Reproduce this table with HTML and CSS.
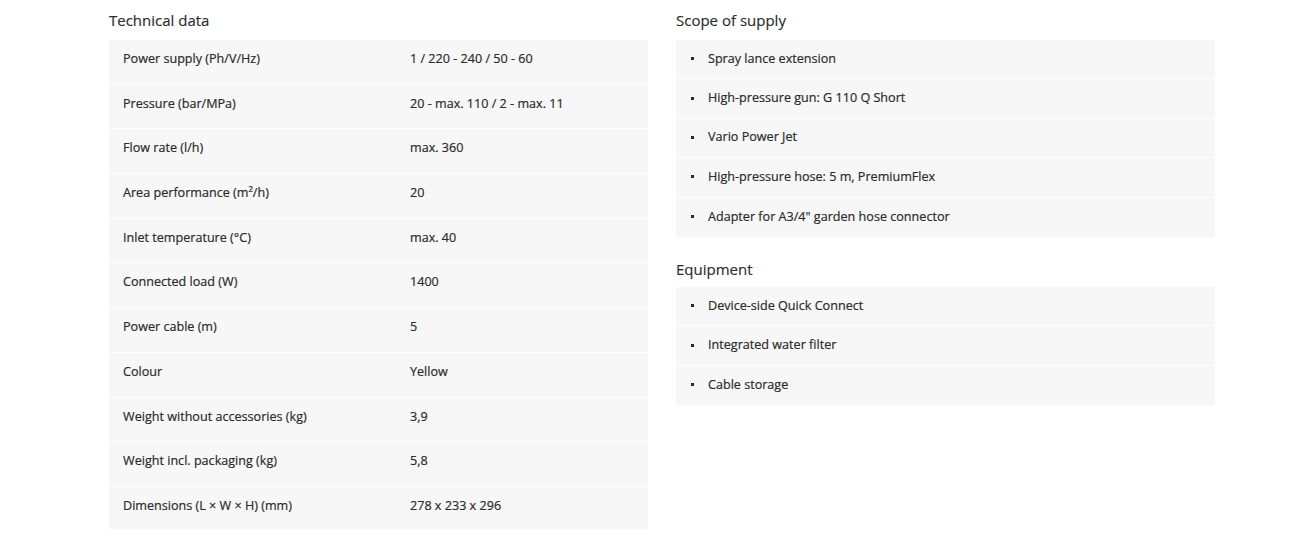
FILE: index.html
```html
<!DOCTYPE html>
<html>
<head>
<meta charset="utf-8">
<link rel="stylesheet" href="styles.css">
</head>
<body>
<div class="page">
  <section class="col">
    <h2 class="title">Technical data</h2>
    <div class="table">
      <div class="row"><span class="label">Power supply (Ph/V/Hz)</span><span class="value">1 / 220 - 240 / 50 - 60</span></div>
      <div class="row"><span class="label">Pressure (bar/MPa)</span><span class="value">20 - max. 110 / 2 - max. 11</span></div>
      <div class="row"><span class="label">Flow rate (l/h)</span><span class="value">max. 360</span></div>
      <div class="row"><span class="label">Area performance (m²/h)</span><span class="value">20</span></div>
      <div class="row"><span class="label">Inlet temperature (°C)</span><span class="value">max. 40</span></div>
      <div class="row"><span class="label">Connected load (W)</span><span class="value">1400</span></div>
      <div class="row"><span class="label">Power cable (m)</span><span class="value">5</span></div>
      <div class="row"><span class="label">Colour</span><span class="value">Yellow</span></div>
      <div class="row"><span class="label">Weight without accessories (kg)</span><span class="value">3,9</span></div>
      <div class="row"><span class="label">Weight incl. packaging (kg)</span><span class="value">5,8</span></div>
      <div class="row"><span class="label">Dimensions (L × W × H) (mm)</span><span class="value">278 x 233 x 296</span></div>
    </div>
  </section>
  <section class="col">
    <h2 class="title">Scope of supply</h2>
    <ul class="list">
      <li>Spray lance extension</li>
      <li>High-pressure gun: G 110 Q Short</li>
      <li>Vario Power Jet</li>
      <li>High-pressure hose: 5 m, PremiumFlex</li>
      <li>Adapter for A3/4" garden hose connector</li>
    </ul>
    <h2 class="title second">Equipment</h2>
    <ul class="list">
      <li>Device-side Quick Connect</li>
      <li>Integrated water filter</li>
      <li>Cable storage</li>
    </ul>
  </section>
</div>
</body>
</html>
```

FILE: styles.css
```css
html, body {
  margin: 0;
  padding: 0;
  background: #fff;
}
body {
  font-family: "Open Sans", "DejaVu Sans", sans-serif;
  color: #2b2b2b;
}
.page {
  display: grid;
  grid-template-columns: 539px 539px;
  column-gap: 28px;
  padding: 10px 0 0 109px;
}
.title {
  margin: 0 0 10px 0;
  font-size: 15px;
  font-weight: 400;
  line-height: 20px;
  color: #2b2b2b;
  -webkit-text-stroke: 0.15px #2b2b2b;
}
.title.second {
  margin-top: 22px;
  margin-bottom: 8px;
}
.table {
  display: flex;
  flex-direction: column;
}
.row {
  display: grid;
  grid-template-columns: 287px 1fr;
  align-items: start;
  height: 44.7px;
  padding-left: 14px;
  padding-top: 10px;
  box-sizing: border-box;
  background: #f7f7f7;
  border-bottom: 1px solid #fff;
  font-size: 12.6px;
  line-height: 18px;
  -webkit-text-stroke: 0.2px #2b2b2b;
}
.row:last-child { border-bottom: none; height: 42.5px; }
.list {
  list-style: none;
  margin: 0;
  padding: 0;
}
.list li {
  position: relative;
  display: flex;
  align-items: center;
  height: 39.4px;
  padding-left: 32px;
  padding-bottom: 2px;
  box-sizing: border-box;
  background: #f7f7f7;
  border-bottom: 1px solid #fff;
  font-size: 12.6px;
  -webkit-text-stroke: 0.2px #2b2b2b;
}
.list li:last-child { border-bottom: none; }
.list li::before {
  content: "";
  position: absolute;
  left: 15px;
  top: 50%;
  width: 3px;
  height: 3px;
  margin-top: -2px;
  background: #2b2b2b;
}
```
